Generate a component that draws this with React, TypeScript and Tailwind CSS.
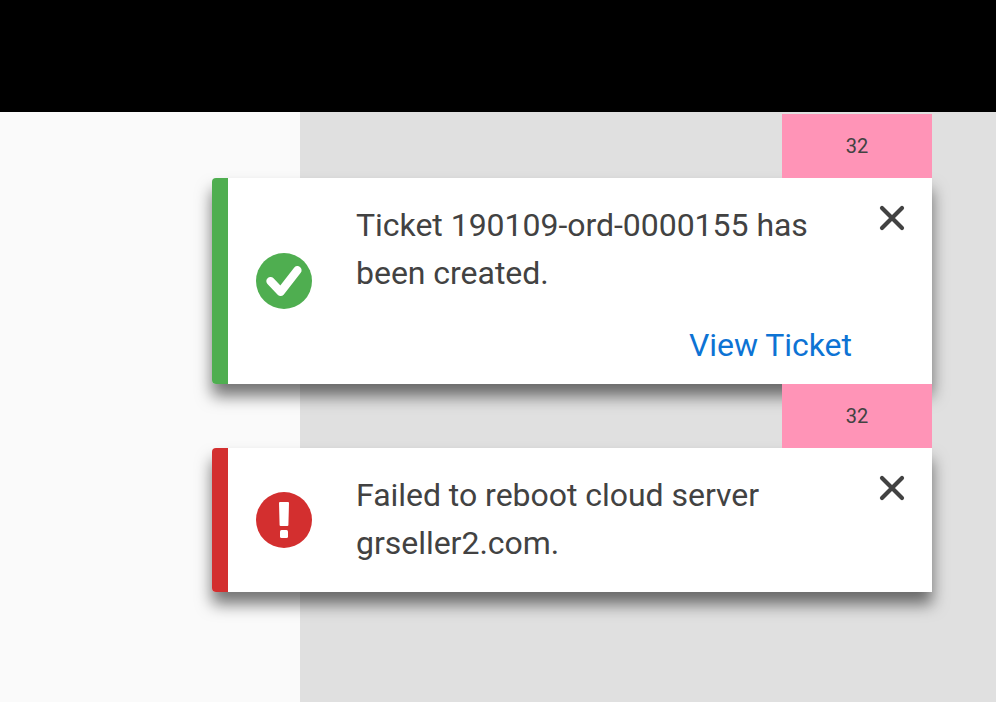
import type { ReactNode } from 'react';

function CloseIcon() {
  return (
    <svg className="block h-7 w-7" viewBox="0 0 28 28" fill="none" stroke="#424242" strokeWidth="4.2" strokeLinecap="round">
      <path d="M4 4 24 24M24 4 4 24" />
    </svg>
  );
}

function SuccessIcon() {
  return (
    <svg className="block h-14 w-14" viewBox="0 0 56 56">
      <circle cx="28" cy="28" r="28" fill="#4fae50" />
      <path d="M14.5 28.2 24.7 38.8 41.4 17.2" fill="none" stroke="#fff" strokeWidth="8.4" strokeLinecap="round" strokeLinejoin="round" />
    </svg>
  );
}

function ErrorIcon() {
  return (
    <svg className="block h-14 w-14" viewBox="0 0 56 56">
      <circle cx="28" cy="28" r="28" fill="#d32f2f" />
      <path d="M24 10H32Q33 10 33 11L32.4 33Q32.4 34 31.4 34H24.6Q23.6 34 23.6 33L23 11Q23 10 24 10Z" fill="#fff" />
      <rect x="24" y="38" width="8" height="8" rx="1.5" fill="#fff" />
    </svg>
  );
}

function Spacer() {
  return (
    <div className="relative z-10 flex h-16 w-[150px] items-center justify-center self-end bg-[#ff94b7] text-[20px] leading-6 text-[#424242]">
      32
    </div>
  );
}

function Toast({ accent, icon, message, action }: { accent: string; icon: ReactNode; message: string; action?: string }) {
  return (
    <div className="flex w-full rounded-l-[4px] bg-white shadow-[0_12px_16px_rgba(0,0,0,0.54)]">
      <div className={`w-4 shrink-0 rounded-l-[4px] ${accent}`} />
      <div className="flex w-28 shrink-0 items-center justify-center">{icon}</div>
      <div className="flex w-[512px] shrink-0 flex-col pb-[25px] pl-4 pt-[23px] text-[32px] leading-[48px] tracking-[-0.03px]">
        <p className="w-[464px] text-[#424242]">{message}</p>
        {action && <button className="-mb-[10px] mt-6 self-end text-[32px] leading-[48px] text-[#0d73d4]">{action}</button>}
      </div>
      <button className="mt-[26px] ml-[26px] h-7 w-7 shrink-0" aria-label="Close">
        <CloseIcon />
      </button>
    </div>
  );
}

export default function App() {
  return (
    <div className="flex h-[702px] w-[996px] flex-col overflow-hidden bg-white font-['Roboto',sans-serif]">
      <div className="h-28 shrink-0 bg-black" />
      <main className="flex flex-1 flex-col bg-[linear-gradient(to_right,#fafafa_300px,#e0e0e0_300px)] pl-[212px] pr-16 pt-0.5">
        <Spacer />
        <Toast accent="bg-[#4fae50]" icon={<SuccessIcon />} message="Ticket 190109-ord-0000155 has been created." action="View Ticket" />
        <Spacer />
        <Toast accent="bg-[#d32f2f]" icon={<ErrorIcon />} message="Failed to reboot cloud server grseller2.com." />
      </main>
    </div>
  );
}
